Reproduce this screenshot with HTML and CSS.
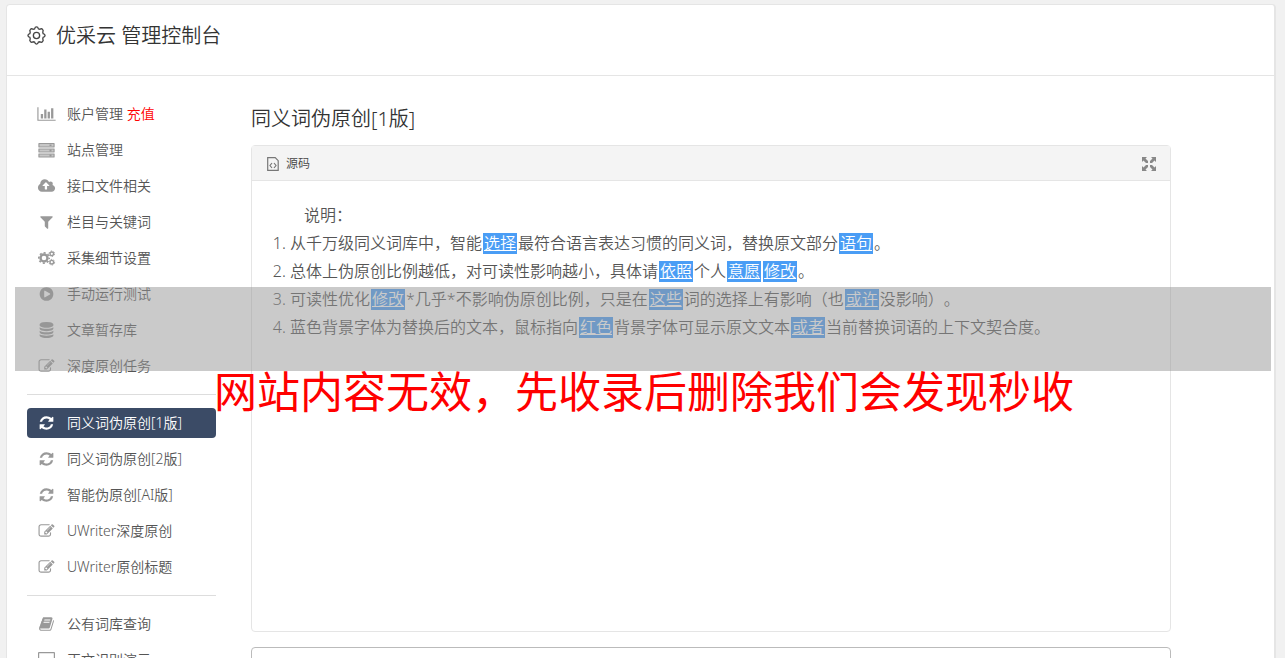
FILE: index.html
```html
<!DOCTYPE html>
<html lang="zh-CN">
<head>
  <meta charset="UTF-8" />
  <meta name="viewport" content="width=device-width, initial-scale=1.0"/>
  <title>优采云 管理控制台</title>
  <link rel="stylesheet" href="styles.css">
</head>
<body>
  <!-- shared icons -->
  <svg class="sprite" aria-hidden="true">
    <symbol id="i-chart" viewBox="0 0 2048 1792"><path d="M640 896v512h-256v-512h256zm384-512v1024h-256v-1024h256zm1024 1152v128h-2048v-1536h128v1408h1920zm-640-896v768h-256v-768h256zm384-384v1152h-256v-1152h256z"/></symbol>
    <symbol id="i-server" viewBox="0 0 18 16"><path fill-opacity=".55" d="M1 2h16v3H1zM1 7h16v3H1zM1 12h16v3H1z"/><path d="M1 1h16v1H1zM1 4.500h16v1H1zM1 6.500h16v1H1zM1 9.500h16v1H1zM1 11.500h16v1H1zM1 14.500h16v1H1zM1 1h1v4H1zM16 1h1v4h-1zM1 7h1v3H1zM16 7h1v3h-1zM1 12h1v3H1zM16 12h1v3h-1zM12 2.500h2v1.500h-2zM12 7.700h2v1.500h-2zM12 12.700h2v1.500h-2z"/></symbol>
    <symbol id="i-cloud" viewBox="0 0 2048 1792"><path d="M1344 864q0-14-9-23l-352-352q-9-9-23-9t-23 9l-351 351q-10 12-10 24 0 14 9 23t23 9h224v352q0 13 9.500 22.500t22.500 9.500h192q13 0 22.500-9.500t9.500-22.500v-352h224q13 0 22.500-9.500t9.500-22.500zm640 288q0 159-112.500 271.500t-271.500 112.500h-1088q-185 0-316.500-131.500t-131.500-316.500q0-130 70-240t188-165q-2-30-2-43 0-212 150-362t362-150q156 0 285.500 87t188.500 231q71-62 166-62 106 0 181 75t75 181q0 76-41 138 130 31 213.500 135.500t83.500 238.500z"/></symbol>
    <symbol id="i-filter" viewBox="0 0 1792 1792"><path d="M1595 295q17 41-14 70l-493 493v742q0 42-39 59-13 5-25 5-27 0-45-19l-256-256q-19-19-19-45v-486l-493-493q-31-29-14-70 17-39 59-39h1280q42 0 59 39z"/></symbol>
    <symbol id="i-cogs" viewBox="0 0 18 16">
      <g fill="none" stroke="currentColor">
        <circle cx="6.500" cy="8" r="3.500" stroke-width="2.400"/>
        <circle cx="6.500" cy="8" r="5.200" stroke-width="1.600" stroke-dasharray="2.040 2.040" stroke-dashoffset="1"/>
        <circle cx="14.300" cy="3.800" r="1.800" stroke-width="1.400"/>
        <circle cx="14.300" cy="3.800" r="2.800" stroke-width="1" stroke-dasharray="1.470 1.460"/>
        <circle cx="14.300" cy="12.200" r="1.800" stroke-width="1.400"/>
        <circle cx="14.300" cy="12.200" r="2.800" stroke-width="1" stroke-dasharray="1.470 1.460"/>
      </g>
    </symbol>
    <symbol id="i-play" viewBox="0 0 1792 1792"><path d="M896 128q209 0 385.500 103t279.500 279.500 103 385.500-103 385.500-279.500 279.500-385.500 103-385.500-103-279.500-279.500-103-385.500 103-385.500 279.500-279.500 385.500-103zm384 823q32-18 32-55t-32-55l-544-320q-31-19-64-1-32 19-32 56v640q0 37 32 56 16 8 32 8 17 0 32-9z"/></symbol>
    <symbol id="i-database" viewBox="0 0 1792 1792"><path d="M896 768q237 0 443-43t325-127v170q0 69-103 128t-280 93.500-385 34.500-385-34.500-280-93.500-103-128v-170q119 84 325 127t443 43zm0 768q237 0 443-43t325-127v170q0 69-103 128t-280 93.500-385 34.500-385-34.500-280-93.500-103-128v-170q119 84 325 127t443 43zm0-384q237 0 443-43t325-127v170q0 69-103 128t-280 93.500-385 34.500-385-34.500-280-93.500-103-128v-170q119 84 325 127t443 43zm0-1152q208 0 385 34.500t280 93.500 103 128v128q0 69-103 128t-280 93.500-385 34.500-385-34.500-280-93.500-103-128v-128q0-69 103-128t280-93.500 385-34.500z"/></symbol>
    <symbol id="i-edit" viewBox="0 0 1792 1792"><path d="M888 1184l116-116-152-152-116 116v56h96v96h56zm440-720q-16-16-33 1l-350 350q-17 17-1 33t33-1l350-350q17-17 1-33zm80 594v190q0 119-84.500 203.500t-203.500 84.500h-832q-119 0-203.500-84.500t-84.500-203.500v-832q0-119 84.500-203.500t203.500-84.500h832q63 0 117 25 15 7 18 23 3 17-9 29l-49 49q-14 14-32 8-23-6-45-6h-832q-66 0-113 47t-47 113v832q0 66 47 113t113 47h832q66 0 113-47t47-113v-126q0-13 9-22l64-64q15-15 35-7t20 29zm-96-738l288 288-672 672h-288v-288zm444 132l-92 92-288-288 92-92q28-28 68-28t68 28l152 152q28 28 28 68t-28 68z"/></symbol>
    <symbol id="i-refresh" viewBox="0 0 1792 1792"><path d="M1639 1056q0 5-1 7-64 268-268 434.500t-478 166.500q-146 0-282.500-55t-243.500-157l-129 129q-19 19-45 19t-45-19-19-45v-448q0-26 19-45t45-19h448q26 0 45 19t19 45-19 45l-137 137q71 66 161 102t187 36q134 0 250-65t186-179q11-17 53-117 8-23 30-23h192q13 0 22.500 9.500t9.500 22.500zm25-800v448q0 26-19 45t-45 19h-448q-26 0-45-19t-19-45 19-45l138-138q-148-137-349-137-134 0-250 65t-186 179q-11 17-53 117-8 23-30 23h-199q-13 0-22.500-9.500t-9.500-22.500v-7q65-268 270-434.500t480-166.500q146 0 284 55.500t245 156.500l130-129q19-19 45-19t45 19 19 45z"/></symbol>
    <symbol id="i-book" viewBox="0 0 1792 1792"><path d="M1703 478q40 57 18 129l-275 906q-19 64-76.500 107.500t-122.500 43.500h-923q-77 0-148.500-53.500t-99.500-131.500q-24-67-2-127 0-4 3-27t4-37q1-8-3-21.500t-3-19.500q2-11 8-21t16.500-23.500 16.500-23.500q23-38 45-91.500t30-91.500q3-10 .5-30t-.5-28q3-11 17-28t17-23q21-36 42-92t25-90q1-9-2.500-32t.5-28q4-13 22-30.500t22-22.500q19-26 42.500-84.500t27.500-96.500q1-8-3-25.500t-2-26.500q2-8 9-18t18-23 17-21q8-12 16.500-30.500t15-35 16-36 19.500-32 26.500-23.500 36-11.500 47.500 5.500l-1 3q38-9 51-9h761q74 0 114 56t18 130l-274 906q-36 119-71.500 153.500t-128.500 34.500h-869q-27 0-38 15-11 16-1 43 24 70 144 70h923q29 0 56-15.500t35-41.500l300-987q7-22 5-57 38 15 59 43zm-1064 2q-4 13 2 22.500t20 9.500h608q13 0 25.500-9.500t16.500-22.500l21-64q4-13-2-22.500t-20-9.500h-608q-13 0-25.500 9.500t-16.500 22.500zm-83 256q-4 13 2 22.500t20 9.500h608q13 0 25.500-9.500t16.500-22.500l21-64q4-13-2-22.500t-20-9.500h-608q-13 0-25.500 9.500t-16.500 22.500z"/></symbol>
    <symbol id="i-desktop" viewBox="0 0 18 16"><path fill-rule="evenodd" d="M1.500 0h15q1 0 1 1v10.500q0 1-1 1h-5.500l1 2.500h-6l1-2.500h-5.500q-1 0-1-1v-10.500q0-1 1-1zM1.700 1.200v8.300h14.600v-8.300z"/></symbol>
  </svg>

  <div class="container">
    <header class="header">
      <svg class="gear" viewBox="0 0 20 20" aria-hidden="true">
        <path d="M10 1 Q11.500 1 12 3 Q13 3.400 13.600 3.400 Q15.300 2.300 16.400 3.600 Q17.600 4.700 16.600 6.400 Q16.800 7.200 17 8 Q19 8.500 19 10 Q19 11.500 17 12 Q16.800 12.800 16.600 13.600 Q17.600 15.300 16.400 16.400 Q15.300 17.600 13.600 16.600 Q12.800 16.800 12 17 Q11.500 19 10 19 Q8.500 19 8 17 Q7.200 16.800 6.400 16.600 Q4.700 17.600 3.600 16.400 Q2.400 15.300 3.400 13.600 Q3.200 12.800 3 12 Q1 11.500 1 10 Q1 8.500 3 8 Q3.200 7.200 3.400 6.400 Q2.400 4.700 3.600 3.600 Q4.700 2.400 6.400 3.400 Q7.200 3.200 8 3 Q8.500 1 10 1z"/>
        <circle cx="10" cy="10" r="3.300"/>
      </svg>
      <h1>优采云 管理控制台</h1>
    </header>

    <div class="content">
      <nav class="sidebar">
        <a href="#"><svg class="icon"><use href="#i-chart"/></svg><span>账户管理 <span class="recharge">充值</span></span></a>
        <a href="#"><svg class="icon"><use href="#i-server"/></svg>站点管理</a>
        <a href="#"><svg class="icon"><use href="#i-cloud"/></svg>接口文件相关</a>
        <a href="#"><svg class="icon"><use href="#i-filter"/></svg>栏目与关键词</a>
        <a href="#"><svg class="icon"><use href="#i-cogs"/></svg>采集细节设置</a>
        <a href="#"><svg class="icon"><use href="#i-play"/></svg>手动运行测试</a>
        <a href="#"><svg class="icon"><use href="#i-database"/></svg>文章暂存库</a>
        <a href="#"><svg class="icon"><use href="#i-edit"/></svg>深度原创任务</a>
        <hr>
        <a href="#" class="active"><svg class="icon"><use href="#i-refresh"/></svg>同义词伪原创[1版]</a>
        <a href="#"><svg class="icon"><use href="#i-refresh"/></svg>同义词伪原创[2版]</a>
        <a href="#"><svg class="icon"><use href="#i-refresh"/></svg>智能伪原创[AI版]</a>
        <a href="#"><svg class="icon"><use href="#i-edit"/></svg>UWriter深度原创</a>
        <a href="#"><svg class="icon"><use href="#i-edit"/></svg>UWriter原创标题</a>
        <hr>
        <a href="#"><svg class="icon"><use href="#i-book"/></svg>公有词库查询</a>
        <a href="#"><svg class="icon"><use href="#i-desktop"/></svg>正文识别演示</a>
      </nav>

      <main class="main">
        <h2>同义词伪原创[1版]</h2>

        <div class="editor">
          <div class="toolbar">
            <button type="button">
              <svg class="source-icon" viewBox="0 0 12 14" aria-hidden="true"><path d="M.7.7h7.500l3 3v9.600H.7zM5 6L3 8.500 5 11M7 6l2 2.500L7 11"/></svg>
              源码
            </button>
            <button type="button" aria-label="全屏">
              <svg class="expand-icon" viewBox="0 0 14 14" aria-hidden="true"><path d="M0 0h5L3.500 1.500 6 4v2H4L1.500 3.500 0 5zM14 0v5l-1.500-1.500L10 6H8V4l2.500-2.500L9 0zM0 14V9l1.500 1.500L4 8h2v2l-2.500 2.500L5 14zM14 14H9l1.500-1.500L8 10V8h2l2.500 2.500L14 9z"/></svg>
            </button>
          </div>
          <div class="text">
            <p>说明：</p>
            <ol>
              <li>从千万级同义词库中，智能<a href="#">选择</a>最符合语言表达习惯的同义词，替换原文部分<a href="#">语句</a>。</li>
              <li>总体上伪原创比例越低，对可读性影响越小，具体请<a href="#">依照</a>个人<a href="#">意愿</a><a href="#">修改</a>。</li>
              <li>可读性优化<a href="#">修改</a>*几乎*不影响伪原创比例，只是在<a href="#">这些</a>词的选择上有影响（也<a href="#">或许</a>没影响）。</li>
              <li>蓝色背景字体为替换后的文本，鼠标指向<a href="#">红色</a>背景字体可显示原文文本<a href="#">或者</a>当前替换词语的上下文契合度。</li>
            </ol>
          </div>
        </div>

        <textarea class="extra" aria-label="文本"></textarea>
      </main>
    </div>
  </div>

  <div class="band"></div>
  <div class="notice">网站内容无效，先收录后删除我们会发现秒收</div>
</body>
</html>
```

FILE: styles.css
```css
* {
  box-sizing: border-box;
}

body {
  margin: 0;
  position: relative;
  background: #f1f1f1;
  color: #666;
  font-family: "Noto Sans", "Noto Sans CJK SC", sans-serif;
  font-size: 14px;
  font-weight: 350;
  text-spacing-trim: space-all;
}

.sprite {
  display: none;
}

.container {
  margin: 4px 9px 0 6px;
  background: #fff;
  border: 1px solid #e5e5e5;
  border-right-width: 2px;
  border-radius: 4px 4px 0 0;
}

.header {
  display: flex;
  align-items: center;
  gap: 10px;
  height: 71px;
  padding: 0 20px 10px;
  border-bottom: 1px solid #e5e5e5;
}

.gear {
  width: 19px;
  height: 19px;
  fill: none;
  stroke: #444;
  stroke-width: 1.4;
}

h1,
h2 {
  margin: 0;
  padding-top: 2px;
  font-size: 20px;
  font-weight: 350;
  line-height: 28px;
  color: #333;
}

.content {
  display: flex;
  gap: 35px;
  padding: 23px 20px;
}

.sidebar {
  display: flex;
  flex-direction: column;
  flex: 0 0 189px;
  gap: 6px;
}

.sidebar a {
  display: flex;
  align-items: center;
  gap: 11px;
  height: 30px;
  padding: 0 0 2px 10px;
  border-radius: 4px;
  color: #555;
  text-decoration: none;
}

.sidebar .active {
  background: #3b4b66;
  color: #fff;
}

.sidebar hr {
  width: 100%;
  margin: 7px 0;
  border: none;
  border-top: 1px solid #ddd;
}

.icon {
  width: 19px;
  height: 16px;
  margin-top: 2px;
  color: #999;
  fill: currentColor;
}

.active .icon {
  color: #fff;
}

.sidebar .recharge {
  color: #f00;
}

.main {
  flex: 1;
  max-width: 920px;
  padding-top: 4px;
}

.editor {
  height: 487px;
  margin-top: 12px;
  border: 1px solid #e5e5e5;
  border-radius: 4px;
}

.toolbar {
  display: flex;
  justify-content: space-between;
  align-items: center;
  height: 35px;
  padding: 2px 14px 0 15px;
  background: #f4f4f4;
  border-bottom: 1px solid #e5e5e5;
}

.toolbar button {
  display: flex;
  align-items: center;
  gap: 7px;
  padding: 0;
  border: none;
  background: none;
  color: #444;
  font: inherit;
  font-size: 12px;
  line-height: 16px;
  cursor: pointer;
}

.source-icon {
  width: 12px;
  height: 14px;
  fill: none;
  stroke: #777;
  stroke-width: 1.2;
}

.expand-icon {
  width: 14px;
  height: 14px;
  fill: #888;
}

.text {
  padding: 20px;
  color: #555;
  font-size: 16px;
  line-height: 28px;
}

.text p {
  margin: 0;
  text-indent: 2em;
}

.text ol {
  margin: 0;
  padding-left: 18px;
}

.text li a {
  display: inline-block;
  margin: 0 1px;
  padding: 0 1px;
  background: #4a9df5;
  color: #fff;
  line-height: 21px;
}

.extra {
  display: block;
  width: 100%;
  height: 120px;
  margin-top: 15px;
  border: 1px solid #bbb;
  border-radius: 4px;
  resize: none;
}

/* overlay over the whole page */
.band {
  position: absolute;
  top: 287px;
  left: 15px;
  right: 14px;
  height: 84px;
  background: rgba(150, 150, 150, 0.5);
}

.notice {
  position: absolute;
  top: 362px;
  left: 214px;
  color: #f00;
  font-size: 43px;
  font-weight: 400;
  line-height: 60px;
  white-space: nowrap;
}
```
